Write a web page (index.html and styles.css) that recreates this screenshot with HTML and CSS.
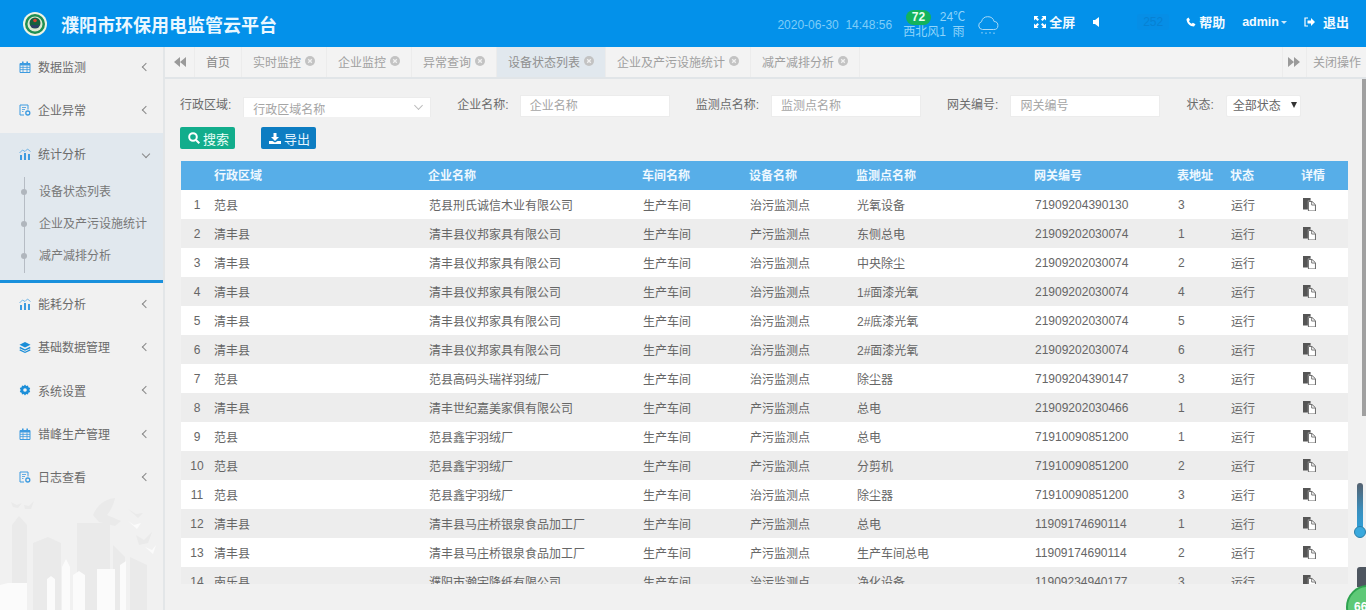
FILE: index.html
```html
<!DOCTYPE html>
<html lang="zh">
<head>
<meta charset="utf-8">
<title>濮阳市环保用电监管云平台</title>
<link rel="stylesheet" href="styles.css">
</head>
<body>
<svg class="defs" width="0" height="0" aria-hidden="true">
  <symbol id="i-cal" viewBox="0 0 12 12"><path d="M1 2.500h10v9H1z" fill="none" stroke="#3d9be0"/><path d="M1 2h10v2.500H1z" fill="#3d9be0"/><path d="M3 .5h1.600v2.500H3zM7.400.5H9v2.500H7.400z" fill="#3d9be0"/><path d="M1 6.400h10M1 8.600h10M4 4.500v7M8 4.500v7" stroke="#3d9be0" stroke-width=".8"/></symbol>
  <symbol id="i-doc" viewBox="0 0 12 12"><path d="M5 11H1V1h8v4.500" fill="none" stroke="#3d9be0"/><path d="M3 3.500h4M3 5.500h3M3 7.500h1.500" stroke="#3d9be0" stroke-width=".8"/><circle cx="8.800" cy="9" r="2" fill="none" stroke="#3d9be0" stroke-width="1.300"/></symbol>
  <symbol id="i-chart" viewBox="0 0 12 12"><path d="M1 7h2v5H1zM5 5h2v7H5zM9 6h2v6H9z" fill="#3d9be0"/><path d="M.5 5 3.500 2 6 3.500 8.500 1 11.500 3.500" fill="none" stroke="#3d9be0" stroke-width=".7"/></symbol>
  <symbol id="i-stack" viewBox="0 0 12 12"><path d="M6 1 11.500 3.800 6 6.600.5 3.800z" fill="#1b8ed8"/><path d="M1 5.800 6 8.300l5-2.500.5 1.400L6 9.800.5 7.200zM1 8.200 6 10.700l5-2.500.5 1.200L6 12 .5 9.400z" fill="#1b8ed8"/></symbol>
  <symbol id="i-gear" viewBox="0 0 12 12"><path d="M6 .5 7.200 2 9 1.500 9.400 3.300 11.200 4 10.400 6 11.200 8 9.400 8.700 9 10.500 7.200 10 6 11.500 4.800 10 3 10.500 2.600 8.700.8 8 1.600 6 .8 4 2.600 3.300 3 1.500 4.800 2z" fill="#1b8ed8"/><circle cx="6" cy="6" r="1.800" fill="#f1f1f1"/></symbol>
  <symbol id="i-copy" viewBox="0 0 12 12"><path d="M0 0h7v2.500H4.500V10.500H0z" fill="#555"/><path d="M5 3.200h3.300l3.200 3V12H5z" fill="#fff" stroke="#666" stroke-width=".9"/><path d="M8 3.500V6.500h3.200" fill="none" stroke="#666" stroke-width=".8"/></symbol>
  <symbol id="i-tabclose" viewBox="0 0 10 10"><circle cx="5" cy="5" r="5" fill="#c3c3c3"/><path d="M3.200 3.200 6.800 6.800M6.800 3.200 3.200 6.800" stroke="#f1f1f1" stroke-width="1.300"/></symbol>
</svg>

<header class="topbar">
  <div class="brand">
    <svg class="logo" viewBox="0 0 24 24" width="24" height="24">
      <circle cx="12" cy="12" r="12" fill="#eef3e4"/>
      <circle cx="12" cy="12" r="10" fill="#1f8f52"/>
      <circle cx="12" cy="12" r="7.500" fill="#dfe9d2"/>
      <circle cx="12" cy="11" r="5.500" fill="#16603f"/>
      <circle cx="12" cy="8.500" r="1.800" fill="#d8432f"/>
      <path d="M7.500 13h9l-1.500 3H9z" fill="#2c3f66"/>
    </svg>
    <span class="brand-title">濮阳市环保用电监管云平台</span>
  </div>
  <div class="top-right">
    <span class="clock">2020-06-30&nbsp;&nbsp;14:48:56</span>
    <div class="weather">
      <div class="weather-line"><span class="aqi">72</span><span class="temp">24℃</span></div>
      <div class="wind">西北风1&nbsp;&nbsp;雨</div>
    </div>
    <svg class="cloud" viewBox="0 0 24 24" width="24" height="24">
      <path d="M6.500 16.500a4 4 0 0 1-1-7.800 6.500 6.500 0 0 1 12.600-.2 4 4 0 0 1-.4 8z" fill="none" stroke="#a9d9f7" stroke-width="1"/>
      <path d="M6 19v1.500M10 19.500V21M14 19v1.500M18 19.500V21" stroke="#a9d9f7" stroke-width="1"/>
    </svg>
    <span class="tool tool-full">
      <svg viewBox="0 0 12 12" width="12" height="12"><path d="M0 0h4.500L3 1.500 5 3.500 3.500 5 1.500 3 0 4.500zM12 0v4.500L10.500 3 8.500 5 7 3.500 9 1.500 7.500 0zM0 12V7.500L1.500 9l2-2L5 8.500l-2 2L4.500 12zM12 12H7.500L9 10.500l-2-2L8.500 7l2 2L12 7.500z" fill="#fff"/></svg>全屏
    </span>
    <svg class="speaker" viewBox="0 0 6 10" width="6" height="10"><path d="M0 3h2l4-3v10L2 7H0z" fill="#fff"/></svg>
    <span class="dim-count">252</span>
    <span class="tool tool-help">
      <svg viewBox="0 0 10 10" width="10" height="10"><path d="M2.500.5 4 3 3 4c.5 1.300 1.500 2.300 2.800 2.800l1-1L9.500 7.300 8 9.500C4 9.500.5 6 .5 2z" fill="#fff"/></svg>帮助
    </span>
    <span class="tool tool-user">admin<i class="caret"></i></span>
    <span class="tool tool-exit">
      <svg viewBox="0 0 11 10" width="11" height="10"><path d="M4 1H1v8h3" fill="none" stroke="#fff" stroke-width="1.200"/><path d="M3.500 3.500H7V1l4 4-4 4V6.500H3.500z" fill="#fff"/></svg>退出
    </span>
  </div>
</header>

<div class="layout">
  <aside class="sidebar">
    <svg class="city" viewBox="0 0 163 125" width="163" height="125">
      <g fill="#eaeaea">
        <path d="M12 125V40l7-9 8 9v85zM33 125V58l15-6 13 6v67zM77 125V38h33v87zM113 125V60l12 12v53zM130 125V72l17 8v45z"/>
        <path d="M93 30c5-12 14-16 22-17-2 8-4 12-8 17l14 6-6 5-16-4z"/>
        <path d="M11 17l6 3 5-2-4 5-5-1zM24 20l5 1 5-5-3 8-6 0z"/>
        <path d="M128 24l8 5 7-1-5 5zM136 50l8 5 8-8-4 11-9 2z"/>
      </g>
      <g fill="#fbfbfb">
        <path d="M0 125V100l8-2v27zM8 125V98h19v27zM47 125V94l4-3 4 3v31zM62 125V82l4-8 4 8v43zM73 125V90l6-4 6 4v35zM97 125V84h18v41zM120 125V80l6-4v49z"/>
        <path d="M128 36l6 4 7-2-4 6zM145 62l7 3 4-5-3 9z"/>
      </g>
    </svg>
    <nav class="menu">
      <a class="menu-item"><svg class="mi"><use href="#i-cal"/></svg><span>数据监测</span><i class="chev"></i></a>
      <a class="menu-item"><svg class="mi"><use href="#i-doc"/></svg><span>企业异常</span><i class="chev"></i></a>
      <div class="menu-open">
        <a class="menu-item menu-item-open"><svg class="mi"><use href="#i-chart"/></svg><span>统计分析</span><i class="chev chev-down"></i></a>
        <ul class="submenu">
          <li>设备状态列表</li>
          <li>企业及产污设施统计</li>
          <li>减产减排分析</li>
        </ul>
      </div>
      <a class="menu-item"><svg class="mi"><use href="#i-chart"/></svg><span>能耗分析</span><i class="chev"></i></a>
      <a class="menu-item"><svg class="mi"><use href="#i-stack"/></svg><span>基础数据管理</span><i class="chev"></i></a>
      <a class="menu-item"><svg class="mi"><use href="#i-gear"/></svg><span>系统设置</span><i class="chev"></i></a>
      <a class="menu-item"><svg class="mi"><use href="#i-cal"/></svg><span>错峰生产管理</span><i class="chev"></i></a>
      <a class="menu-item"><svg class="mi"><use href="#i-doc"/></svg><span>日志查看</span><i class="chev"></i></a>
    </nav>
  </aside>

  <main class="main">
    <div class="tabs">
      <button class="tab-nav"><svg viewBox="0 0 12 10" width="12" height="10"><path d="M6 0v10L0 5zM12 0v10L6 5z" fill="#9a9a9a"/></svg></button>
      <span class="tab tab-home">首页</span>
      <span class="tab">实时监控<svg class="tc"><use href="#i-tabclose"/></svg></span>
      <span class="tab">企业监控<svg class="tc"><use href="#i-tabclose"/></svg></span>
      <span class="tab">异常查询<svg class="tc"><use href="#i-tabclose"/></svg></span>
      <span class="tab tab-active">设备状态列表<svg class="tc"><use href="#i-tabclose"/></svg></span>
      <span class="tab">企业及产污设施统计<svg class="tc"><use href="#i-tabclose"/></svg></span>
      <span class="tab">减产减排分析<svg class="tc"><use href="#i-tabclose"/></svg></span>
      <div class="tabs-right">
        <button class="tab-nav tab-nav-r"><svg viewBox="0 0 12 10" width="12" height="10"><path d="M0 0v10l6-5zM6 0v10l6-5z" fill="#9a9a9a"/></svg></button>
        <span class="tab-close-ops">关闭操作</span>
      </div>
    </div>

    <div class="content">
      <form class="filters">
        <label class="f-label">行政区域:</label>
        <div class="field field-sel">行政区域名称<i class="sel-chev"></i></div>
        <label class="f-label">企业名称:</label>
        <div class="field field-input f-tight">企业名称</div>
        <label class="f-label">监测点名称:</label>
        <div class="field field-input">监测点名称</div>
        <label class="f-label">网关编号:</label>
        <div class="field field-input">网关编号</div>
        <label class="f-label">状态:</label>
        <div class="field field-state">全部状态<i class="tri"></i></div>
      </form>
      <div class="actions">
        <button type="button" class="btn btn-search"><svg viewBox="0 0 12 12" width="12" height="12"><circle cx="5" cy="5" r="3.800" fill="none" stroke="#fff" stroke-width="2"/><path d="M8 8l3.300 3.300" stroke="#fff" stroke-width="2"/></svg>搜索</button>
        <button type="button" class="btn btn-export"><svg viewBox="0 0 12 11" width="12" height="11"><path d="M4.500 0h3v4h2.500L6 8 2 4h2.500z" fill="#fff"/><path d="M0 8h3.500L6 9.500 8.500 8H12v3H0z" fill="#fff"/></svg>导出</button>
      </div>
      <div class="table-wrap">
        <table class="grid">
          <colgroup>
            <col class="c0"><col class="c1"><col class="c2"><col class="c3"><col class="c4"><col class="c5"><col class="c6"><col class="c7"><col class="c8"><col class="c9">
          </colgroup>
          <thead>
            <tr><th></th><th>行政区域</th><th>企业名称</th><th>车间名称</th><th>设备名称</th><th>监测点名称</th><th>网关编号</th><th>表地址</th><th>状态</th><th>详情</th></tr>
          </thead>
          <tbody>
            <tr><td>1</td><td>范县</td><td>范县刑氏诚信木业有限公司</td><td>生产车间</td><td>治污监测点</td><td>光氧设备</td><td>71909204390130</td><td>3</td><td>运行</td><td><svg class="copy"><use href="#i-copy"/></svg></td></tr>
            <tr><td>2</td><td>清丰县</td><td>清丰县仪邦家具有限公司</td><td>生产车间</td><td>产污监测点</td><td>东侧总电</td><td>21909202030074</td><td>1</td><td>运行</td><td><svg class="copy"><use href="#i-copy"/></svg></td></tr>
            <tr><td>3</td><td>清丰县</td><td>清丰县仪邦家具有限公司</td><td>生产车间</td><td>治污监测点</td><td>中央除尘</td><td>21909202030074</td><td>2</td><td>运行</td><td><svg class="copy"><use href="#i-copy"/></svg></td></tr>
            <tr><td>4</td><td>清丰县</td><td>清丰县仪邦家具有限公司</td><td>生产车间</td><td>治污监测点</td><td>1#面漆光氧</td><td>21909202030074</td><td>4</td><td>运行</td><td><svg class="copy"><use href="#i-copy"/></svg></td></tr>
            <tr><td>5</td><td>清丰县</td><td>清丰县仪邦家具有限公司</td><td>生产车间</td><td>治污监测点</td><td>2#底漆光氧</td><td>21909202030074</td><td>5</td><td>运行</td><td><svg class="copy"><use href="#i-copy"/></svg></td></tr>
            <tr><td>6</td><td>清丰县</td><td>清丰县仪邦家具有限公司</td><td>生产车间</td><td>治污监测点</td><td>2#面漆光氧</td><td>21909202030074</td><td>6</td><td>运行</td><td><svg class="copy"><use href="#i-copy"/></svg></td></tr>
            <tr><td>7</td><td>范县</td><td>范县高码头瑞祥羽绒厂</td><td>生产车间</td><td>治污监测点</td><td>除尘器</td><td>71909204390147</td><td>3</td><td>运行</td><td><svg class="copy"><use href="#i-copy"/></svg></td></tr>
            <tr><td>8</td><td>清丰县</td><td>清丰世纪嘉美家俱有限公司</td><td>生产车间</td><td>产污监测点</td><td>总电</td><td>21909202030466</td><td>1</td><td>运行</td><td><svg class="copy"><use href="#i-copy"/></svg></td></tr>
            <tr><td>9</td><td>范县</td><td>范县鑫宇羽绒厂</td><td>生产车间</td><td>产污监测点</td><td>总电</td><td>71910090851200</td><td>1</td><td>运行</td><td><svg class="copy"><use href="#i-copy"/></svg></td></tr>
            <tr><td>10</td><td>范县</td><td>范县鑫宇羽绒厂</td><td>生产车间</td><td>产污监测点</td><td>分剪机</td><td>71910090851200</td><td>2</td><td>运行</td><td><svg class="copy"><use href="#i-copy"/></svg></td></tr>
            <tr><td>11</td><td>范县</td><td>范县鑫宇羽绒厂</td><td>生产车间</td><td>治污监测点</td><td>除尘器</td><td>71910090851200</td><td>3</td><td>运行</td><td><svg class="copy"><use href="#i-copy"/></svg></td></tr>
            <tr><td>12</td><td>清丰县</td><td>清丰县马庄桥银泉食品加工厂</td><td>生产车间</td><td>产污监测点</td><td>总电</td><td>11909174690114</td><td>1</td><td>运行</td><td><svg class="copy"><use href="#i-copy"/></svg></td></tr>
            <tr><td>13</td><td>清丰县</td><td>清丰县马庄桥银泉食品加工厂</td><td>生产车间</td><td>产污监测点</td><td>生产车间总电</td><td>11909174690114</td><td>2</td><td>运行</td><td><svg class="copy"><use href="#i-copy"/></svg></td></tr>
            <tr><td>14</td><td>南乐县</td><td>濮阳市瀚宇降纸有限公司</td><td>生产车间</td><td>治污监测点</td><td>净化设备</td><td>11909234940177</td><td>3</td><td>运行</td><td><svg class="copy"><use href="#i-copy"/></svg></td></tr>
          </tbody>
        </table>
      </div>
      <div class="scrollbar"></div>
    </div>
    <div class="gadget-therm"><i></i></div>
    <div class="gadget-dark"></div>
    <div class="gadget-ball">66</div>
  </main>
</div>
</body>
</html>
```
FILE: styles.css
```css
* { box-sizing: border-box; }
html, body { margin: 0; height: 100%; overflow: hidden; }
body { font-family: "Liberation Sans", "Noto Sans CJK SC", sans-serif; font-size: 12px; color: #666; background: #f1f1f1; }
.defs { position: absolute; }
.topbar { height: 47px; background: #0391ea; display: flex; align-items: center; justify-content: space-between; color: #fff; }
.brand { display: flex; align-items: center; padding-left: 23px; }
.logo { display: block; }
.brand-title { margin-left: 14px; font-size: 18px; font-weight: 700; color: #eaf7ff; }
.top-right { display: flex; align-items: center; height: 100%; }
.clock { font-size: 12px; color: #7fcdf8; margin-right: 11px; margin-top: 3px; }
.weather { width: 62px; color: #8fd4fa; line-height: 15px; font-size: 12px; margin-top: 2px; }
.weather-line { display: flex; align-items: center; height: 15px; }
.aqi { background: #13b35c; color: #e8fff0; font-weight: 700; font-size: 12px; width: 26px; height: 15px; border-radius: 8px; text-align: center; line-height: 15px; margin-left: 3px; margin-right: 9px; }
.temp { font-size: 12px; }
.wind { font-size: 12px; white-space: nowrap; }
.cloud { margin-left: 11px; margin-right: 34px; margin-top: 2px; }
.tool { display: inline-flex; align-items: center; font-size: 13px; font-weight: 700; color: #f2faff; white-space: nowrap; margin-bottom: 4px; }
.tool-full svg { margin-right: 3px; }
.speaker { margin-left: 18px; margin-bottom: 4px; }
.dim-count { width: 32px; height: 16px; margin-left: 38px; margin-bottom: 4px; background: #068ee6; color: #0781d3; font-size: 12px; text-align: center; line-height: 16px; border-radius: 3px; }
.tool-help { margin-left: 17px; }
.tool-help svg { margin-right: 3px; }
.tool-user { margin-left: 17px; font-size: 12.500px; }
.caret { display: inline-block; margin-left: 2px; margin-top: 2px; border: 3px solid transparent; border-top-color: #cde9fb; border-bottom: 0; }
.tool-exit { margin-left: 17px; margin-right: 17px; }
.tool-exit svg { margin-right: 8px; }

.layout { display: flex; height: 563px; }
.sidebar { width: 165px; flex: none; position: relative; background: #f1f1f1; border-right: 2px solid #e3e6e8; overflow: hidden; }
.city { position: absolute; left: 0; bottom: 0; }
.menu { position: relative; display: flex; flex-direction: column; margin-top: -2px; }
.menu-item { display: flex; align-items: center; height: 43.300px; padding-left: 19px; color: #6b6b6b; font-size: 12px; }
.menu-item-open { height: 42.300px; }
.mi { width: 12px; height: 12px; margin-right: 7px; flex: none; }
.chev { margin-left: auto; margin-right: 14px; width: 6px; height: 6px; border-left: 1px solid #888; border-bottom: 1px solid #888; transform: rotate(45deg); }
.chev-down { transform: rotate(-45deg); margin-right: 14px; }
.menu-open { background: #e1e8ee; border-bottom: 3px solid #1a90dc; height: 150.400px; margin-top: 1px; margin-bottom: -1px; }
.submenu { list-style: none; margin: 0 0 0 24px; padding: 1px 0 0 15px; height: 97px; position: relative; color: #777; font-size: 12px; }
.submenu::before { content: ""; position: absolute; left: 0; top: 2px; width: 1px; height: 96px; background: #b6bcc4; }
.submenu li { height: 32px; line-height: 32px; white-space: nowrap; position: relative; }
.submenu li::before { content: ""; position: absolute; left: -18px; top: 13px; width: 6px; height: 6px; border-radius: 50%; background: #b0b6bd; }

.main { flex: 1; min-width: 0; display: flex; flex-direction: column; position: relative; }
.tabs { height: 32px; display: flex; align-items: stretch; background: #f3f3f3; border-bottom: 2px solid #e1e5e8; flex: none; }
.tab-nav { width: 30px; border: 0; padding: 0; background: transparent; border-right: 1px solid #ececec; display: flex; align-items: center; justify-content: center; }
.tab { display: flex; align-items: center; padding: 0 11px 2px; color: #a0a0a0; font-size: 12px; border-right: 1px solid #ececec; white-space: nowrap; }
.tab-home { color: #888; }
.tc { width: 10px; height: 10px; margin-left: 4px; }
.tab-active { background: #e1e8ee; color: #909090; }
.tabs-right { margin-left: auto; display: flex; }
.tab-nav-r { width: 25px; border-left: 1px solid #ececec; border-right: 1px solid #ececec; }
.tab-close-ops { display: flex; align-items: center; padding: 0 5px 2px 6px; color: #a0a0a0; }

.content { flex: 1; min-height: 0; position: relative; background: #f1f1f1; overflow: hidden; padding: 16px 0 0 15px; }
.filters { display: flex; align-items: flex-start; height: 22px; }
.f-label { color: #6b6b6b; line-height: 21px; white-space: nowrap; margin-left: 26px; }
.f-label:first-child { margin-left: 0; }
.field { background: #fff; height: 22px; color: #a5a5a5; line-height: 20px; padding-left: 9px; white-space: nowrap; margin-left: 12px; }
.field-input { width: 150px; border: 1px solid #ececec; }
.f-tight { margin-left: 11px; }
.field-sel { width: 188px; position: relative; margin-top: 2px; border: 1px solid #ececec; border-bottom: 0; height: 20px; line-height: 24px; overflow: hidden; }
.sel-chev { position: absolute; right: 8px; top: 4px; width: 7px; height: 7px; border-right: 1px solid #bbb; border-bottom: 1px solid #bbb; transform: rotate(45deg) scale(.9); }
.field-state { width: 75px; color: #666; padding-left: 6px; position: relative; border: 1px solid #ececec; border-radius: 2px; }
.tri { position: absolute; right: 3px; top: 6px; border: 3.500px solid transparent; border-top: 6px solid #333; border-bottom: 0; }

.actions { display: flex; gap: 26px; margin-top: 10px; height: 22px; }
.btn { height: 22px; width: 55px; border: 0; border-radius: 2px; padding: 0 0 0 8px; display: flex; align-items: center; color: #eafff8; font-family: inherit; font-size: 13px; }
.btn svg { margin-right: 3px; }
.btn-search { background: #12ad8c; }
.btn-export { background: #0d7dc2; color: #e3f4ff; }

.table-wrap { padding: 0 0 0 1px; margin-top: 12px; height: 423px; overflow: hidden; width: 1168px; }
.grid { border-collapse: collapse; table-layout: fixed; width: 1167px; font-size: 12px; color: #666; }
.c0 { width: 33px; } .c1 { width: 214px; } .c2 { width: 214px; } .c3 { width: 107px; } .c4 { width: 107px; } .c5 { width: 178px; } .c6 { width: 143px; } .c7 { width: 53px; } .c8 { width: 71px; } .c9 { width: 47px; }
.grid th { height: 29px; background: #57aee8; color: #eef8ff; font-weight: 700; text-align: left; padding: 0 0 2px 0; }
.grid td { height: 29px; padding: 0 0 0 1px; background: #fff; white-space: nowrap; }
.grid tbody tr:nth-child(even) td { background: #ededed; }
.grid td:first-child { text-align: center; padding: 0 1px 0 0; }
.grid td:nth-child(2) { padding-left: 0; }
.copy { width: 13px; height: 13px; display: block; margin-left: 1px; }

.scrollbar { position: absolute; right: 0; top: 0; width: 4px; height: 337px; background: #a0a0a0; }
.gadget-therm { position: absolute; right: 3px; top: 436px; width: 6px; height: 46px; background: linear-gradient(#55616f 0, #3a8fbe 60%, #2f9fd8 100%); border-radius: 3px; }
.gadget-therm i { position: absolute; left: -3px; bottom: -9px; width: 12px; height: 12px; border-radius: 50%; background: #3aa9dd; border: 1px solid #2a7ea8; }
.gadget-dark { position: absolute; right: 0; top: 520px; width: 9px; height: 20px; background: #4e5660; border-radius: 3px 0 0 0; }
.gadget-ball { position: absolute; left: 1181px; top: 538px; width: 44px; height: 44px; border-radius: 50%; background: #5ec977; border: 2px solid #2fa350; color: #fff; font-size: 12px; font-weight: 700; padding: 13px 0 0 6px; overflow: hidden; }
```
